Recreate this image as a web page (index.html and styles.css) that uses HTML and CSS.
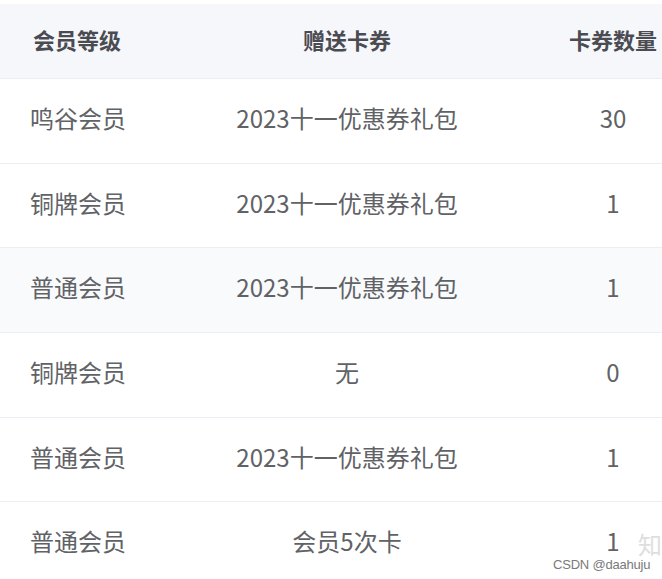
FILE: index.html
```html
<!DOCTYPE html>
<html lang="zh-CN">
<head>
<meta charset="utf-8">
<link rel="stylesheet" href="styles.css">
</head>
<body>
<div class="page">
  <table class="tbl">
    <colgroup>
      <col class="c1"><col class="c2"><col class="c3">
    </colgroup>
    <thead>
      <tr><th class="left">会员等级</th><th>赠送卡券</th><th>卡券数量</th></tr>
    </thead>
    <tbody>
      <tr><td class="left">鸣谷会员</td><td>2023十一优惠券礼包</td><td>30</td></tr>
      <tr class="short"><td class="left">铜牌会员</td><td>2023十一优惠券礼包</td><td>1</td></tr>
      <tr class="stripe"><td class="left">普通会员</td><td>2023十一优惠券礼包</td><td>1</td></tr>
      <tr><td class="left">铜牌会员</td><td>无</td><td>0</td></tr>
      <tr class="short"><td class="left">普通会员</td><td>2023十一优惠券礼包</td><td>1</td></tr>
      <tr><td class="left">普通会员</td><td>会员5次卡</td><td>1</td></tr>
    </tbody>
  </table>
  <div class="wm-zhi">知</div>
  <div class="wm">CSDN @daahuju</div>
</div>
</body>
</html>
```
FILE: styles.css
```css
html, body {
  margin: 0;
  padding: 0;
  background: #fff;
  overflow: hidden;
}
.page {
  position: relative;
  width: 662px;
  height: 579px;
  overflow: hidden;
  padding-top: 4px;
  box-sizing: border-box;
  font-family: "Noto Sans CJK SC", "Noto Sans", sans-serif;
}
.tbl {
  border-collapse: collapse;
  table-layout: fixed;
  width: 722px;
}
.c1 { width: 190px; }
.c2 { width: 314px; }
.c3 { width: 218px; }
.tbl th {
  box-sizing: border-box;
  height: 74px;
  background: #f5f7fa;
  color: #4b4b52;
  font-size: 22px;
  font-weight: 700;
  line-height: 30px;
  text-align: center;
  border-bottom: 1px solid #ebeef5;
  padding: 0 0 3px;
}
.tbl td {
  box-sizing: border-box;
  height: 85px;
  color: #606266;
  font-size: 24px;
  line-height: 32px;
  text-align: center;
  border-bottom: 1px solid #ebeef5;
  padding: 0 0 6px;
}
.tbl tr.short td { height: 84px; padding-bottom: 5px; }
.tbl th.left { text-align: left; padding-left: 33px; }
.tbl td.left { text-align: left; padding-left: 30px; }
.tbl tr.stripe td { background: #f9fafc; }
.wm {
  position: absolute;
  left: 553px;
  top: 557px;
  font-family: "Liberation Sans", sans-serif;
  font-size: 13px;
  color: #7a7a7a;
  letter-spacing: -0.2px;
}
.wm-zhi {
  position: absolute;
  left: 638px;
  top: 526px;
  font-size: 24px;
  color: #dedede;
}
```
